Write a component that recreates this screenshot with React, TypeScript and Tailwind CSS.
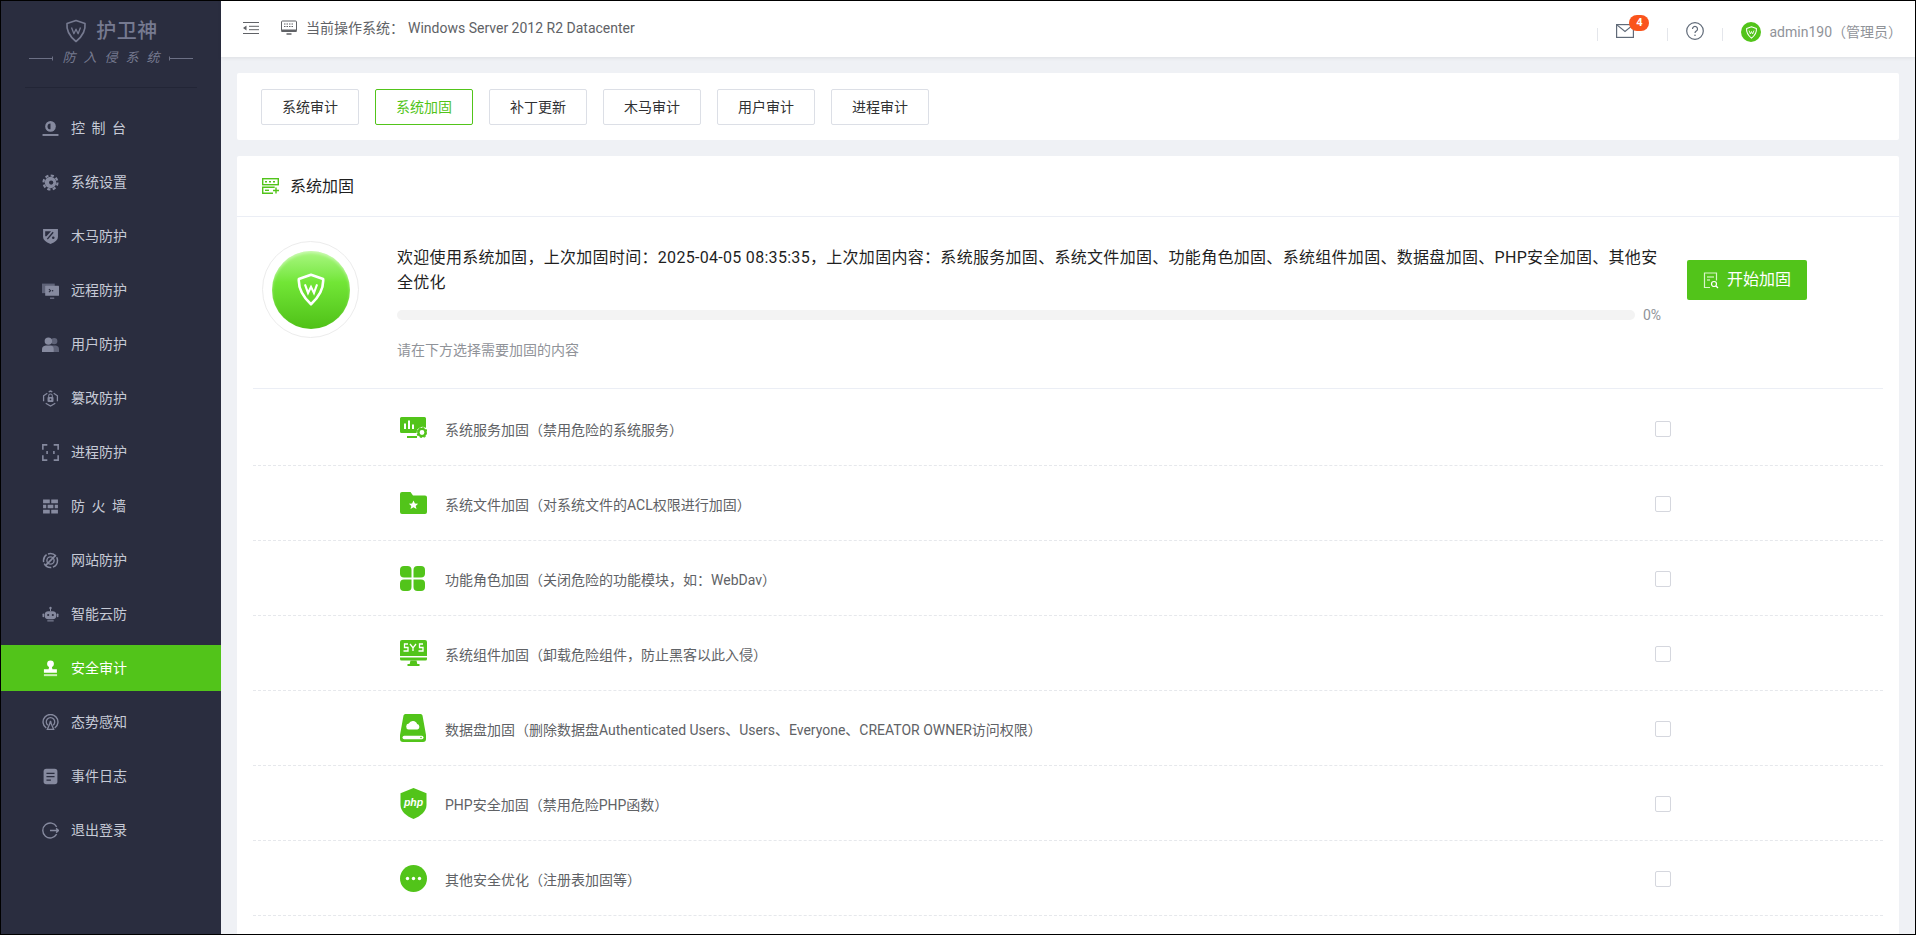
import type { ReactNode } from "react";

const grey = "#868a9f";

function Ico({ children, size = 17 }: { children: ReactNode; size?: number }) {
  return (
    <svg width={size} height={size} viewBox="0 0 16 16" className="shrink-0">
      {children}
    </svg>
  );
}

function Shield({ color = "currentColor", w = 1.4 }: { color?: string; w?: number }) {
  return (
    <g fill="none" stroke={color} strokeWidth={w} strokeLinejoin="round">
      <path d="M8 1 L14 3 Q14.8 9.5 8 15 Q1.2 9.5 2 3 Z" />
      <path d="M5 5.6 L6.6 9.8 L8 6.8 L9.4 9.8 L11 5.6" strokeWidth={w * 0.8} />
    </g>
  );
}

const sideIcons: Record<string, ReactNode> = {
  console: (
    <Ico>
      <circle cx="8" cy="6" r="5" fill={grey} />
      <path d="M8 3.200a2.800 2.800 0 0 0 0 5.600z" fill="#2a2d3f" />
      <rect x="0.500" y="13.200" width="15" height="1.800" fill={grey} />
    </Ico>
  ),
  settings: (
    <Ico>
      <circle cx="8" cy="8" r="5.400" fill={grey} />
      <circle cx="8" cy="8" r="6.600" fill="none" stroke={grey} strokeWidth="2" strokeDasharray="3 2.180" />
      <circle cx="8.600" cy="8" r="2" fill="#2a2d3f" />
    </Ico>
  ),
  trojan: (
    <Ico>
      <path d="M1 1h14v7.500q0 3.800-7 6.500-7-2.700-7-6.500z" fill={grey} />
      <path d="M5 10.500 10.500 4" stroke="#2a2d3f" strokeWidth="1.300" />
      <path d="M3 3h5.500l-4.300 4.800H3z" fill="#2a2d3f" />
      <circle cx="10.600" cy="9.200" r="1.200" fill="#2a2d3f" />
    </Ico>
  ),
  remote: (
    <Ico>
      <rect x="0" y="1.500" width="12" height="9" fill="#5f6378" />
      <rect x="3" y="3.500" width="13" height="9.500" rx="0.500" fill={grey} />
      <path d="M7.500 15.200h4" stroke={grey} strokeWidth="1" />
      <path d="M6.500 6.800l1.600 1.400-1.600 1.400" stroke="#2a2d3f" fill="none" strokeWidth="1" />
      <circle cx="10" cy="8.300" r="0.700" fill="#2a2d3f" />
    </Ico>
  ),
  user: (
    <Ico>
      <circle cx="11.500" cy="4.800" r="3" fill="#5f6378" />
      <path d="M9 9h4q3 .5 3 3.500V15H9z" fill="#5f6378" />
      <circle cx="6" cy="4.800" r="3.500" fill={grey} />
      <path d="M0 15v-2.500Q0 9.500 3.500 9h5Q11 9.500 11 12.500V15z" fill={grey} />
    </Ico>
  ),
  tamper: (
    <Ico>
      <g fill="none" stroke={grey} strokeWidth="1.200">
        <path d="M1.500 10.500v-5L5 3" />
        <path d="M11 3l3.500 2.500v5" />
        <path d="M3.500 12.500 8 15l4.500-2.500" />
        <path d="M6.300 1.800 8 1l1.700.8" />
      </g>
      <rect x="5.200" y="6.500" width="5.600" height="4.700" rx="0.800" fill={grey} />
      <path d="M6.300 6.500V5.400a1.700 1.700 0 0 1 3.400 0v1.100" fill="none" stroke={grey} strokeWidth="1" />
      <circle cx="8" cy="8.800" r="0.800" fill="#2a2d3f" />
    </Ico>
  ),
  process: (
    <Ico>
      <g fill="none" stroke={grey} strokeWidth="1.500">
        <path d="M5 .8H.8v4.500M11 .8h4.200v4.500M5 15.200H.8v-4.500M11 15.200h4.200v-4.500" />
        <path d="M4.800 6.500v3M11.200 6.500v3" />
      </g>
    </Ico>
  ),
  wall: (
    <Ico>
      <path d="M1 1.500h6.300v3.500H1zM8.700 1.500H15v3.500H8.700zM1 6.300h3v3.400H1zM5.300 6.300h5.400v3.400H5.300zM12 6.300h3v3.400h-3zM1 11h6.300v3.500H1zM8.700 11H15v3.500H8.700z" fill={grey} />
    </Ico>
  ),
  web: (
    <Ico>
      <circle cx="8" cy="8" r="6.600" fill="none" stroke={grey} strokeWidth="1.400" strokeDasharray="8 1.500" />
      <circle cx="8" cy="8" r="3.400" fill="none" stroke={grey} strokeWidth="1.300" />
      <path d="M3 13 13 3" stroke={grey} strokeWidth="1.600" />
    </Ico>
  ),
  robot: (
    <Ico>
      <circle cx="8" cy="1.800" r="1.100" fill={grey} />
      <path d="M8 2.500v2.500" stroke={grey} strokeWidth="1" />
      <rect x="2.500" y="5" width="11" height="7.500" rx="3.500" fill={grey} />
      <rect x="0.500" y="7" width="1.500" height="3.500" rx="0.700" fill={grey} />
      <rect x="14" y="7" width="1.500" height="3.500" rx="0.700" fill={grey} />
      <circle cx="5.800" cy="8.500" r="1" fill="#2a2d3f" />
      <circle cx="10.200" cy="8.500" r="1" fill="#2a2d3f" />
      <path d="M5 14h6" stroke={grey} strokeWidth="1" />
    </Ico>
  ),
  audit: (
    <Ico>
      <circle cx="8" cy="3.600" r="3.200" fill="#fff" />
      <path d="M6.800 6h2.400l.6 2.800h4.200V12H1.800V8.800h4.400z" fill="#fff" />
      <rect x="1.800" y="13.300" width="12.400" height="1.900" fill="#cdeeb9" />
    </Ico>
  ),
  radar: (
    <Ico>
      <g fill="none" stroke={grey}>
        <path d="M4 13.200a7 7 0 1 1 8 0" strokeWidth="1.300" />
        <path d="M5.500 10.500a4 4 0 1 1 5 0" strokeWidth="1.200" />
        <path d="M8 7.500l3 7H5z" strokeWidth="1.200" />
      </g>
      <circle cx="8" cy="7.500" r="1" fill={grey} />
    </Ico>
  ),
  log: (
    <Ico>
      <rect x="1.500" y="0.800" width="13" height="14.400" rx="2.500" fill={grey} />
      <path d="M4.200 5h7.600M4.200 8.200h7.600M4.200 11.400h4.200" stroke="#2a2d3f" strokeWidth="1.200" />
    </Ico>
  ),
  logout: (
    <Ico>
      <path d="M13.800 4.500a7 7 0 1 0 0 7" fill="none" stroke={grey} strokeWidth="1.300" />
      <path d="M7.500 8h8M13.300 6l2.200 2-2.200 2" fill="none" stroke={grey} strokeWidth="1.300" />
    </Ico>
  ),
};

const menu = [
  { key: "console", label: "控制台", spaced: true },
  { key: "settings", label: "系统设置" },
  { key: "trojan", label: "木马防护" },
  { key: "remote", label: "远程防护" },
  { key: "user", label: "用户防护" },
  { key: "tamper", label: "篡改防护" },
  { key: "process", label: "进程防护" },
  { key: "wall", label: "防火墙", spaced: true },
  { key: "web", label: "网站防护" },
  { key: "robot", label: "智能云防" },
  { key: "audit", label: "安全审计", active: true },
  { key: "radar", label: "态势感知" },
  { key: "log", label: "事件日志" },
  { key: "logout", label: "退出登录" },
];

const tabs = ["系统审计", "系统加固", "补丁更新", "木马审计", "用户审计", "进程审计"];

const green = "#52c41a";

const rowIcons: ReactNode[] = [
  <svg key="0" width="27" height="22" viewBox="0 0 27 22">
    <path d="M1.500 0h23A1.500 1.500 0 0 1 26 1.500V11a6 6 0 0 0-9.500 5H1.500A1.500 1.500 0 0 1 0 14.500v-13A1.500 1.500 0 0 1 1.500 0z" fill={green} />
    <path d="M5 12V6.500M9 12V3.500M13 12V7.500" stroke="#fff" strokeWidth="2" />
    <rect x="7" y="19" width="10" height="2" fill={green} />
    <circle cx="22" cy="15.500" r="3.600" fill="none" stroke={green} strokeWidth="2.400" />
    <circle cx="22" cy="15.500" r="5" fill="none" stroke={green} strokeWidth="1.200" strokeDasharray="2 1.900" />
  </svg>,
  <svg key="1" width="27" height="22" viewBox="0 0 27 22">
    <path d="M2 0h8.500l2.500 3.500h12a2 2 0 0 1 2 2V20a2 2 0 0 1-2 2H2a2 2 0 0 1-2-2V2a2 2 0 0 1 2-2z" fill={green} />
    <path d="M13.500 8.500l1.400 3 3.200.3-2.400 2.100.8 3.100-3-1.700-3 1.700.8-3.100-2.400-2.100 3.200-.3z" fill="#fff" />
  </svg>,
  <svg key="2" width="25" height="25" viewBox="0 0 25 25">
    <path d="M4 0h3.500A4 4 0 0 1 11.500 4v7.500H4a4 4 0 0 1-4-4V4a4 4 0 0 1 4-4z" fill={green} />
    <path d="M17.500 0H21a4 4 0 0 1 4 4v3.500a4 4 0 0 1-4 4h-7.500V4a4 4 0 0 1 4-4z" fill={green} />
    <path d="M4 13.500h7.500V21a4 4 0 0 1-4 4H4a4 4 0 0 1-4-4v-3.500a4 4 0 0 1 4-4z" fill={green} />
    <path d="M13.500 13.500H21a4 4 0 0 1 4 4V21a4 4 0 0 1-4 4h-3.500a4 4 0 0 1-4-4z" fill={green} />
  </svg>,
  <svg key="3" width="27" height="26" viewBox="0 0 27 26">
    <path d="M2 0h23a2 2 0 0 1 2 2v14H0V2a2 2 0 0 1 2-2z" fill={green} />
    <path d="M0 17.500h27V19a1.500 1.500 0 0 1-1.500 1.500h-24A1.500 1.500 0 0 1 0 19z" fill={green} />
    <path d="M10.500 20.500h6l.8 3.500h-7.600zM7.500 24h12v2h-12z" fill={green} />
    <g fill="none" stroke="#fff" strokeWidth="1.300">
      <path d="M8 4H4.500v3.500H8V11H3.500" />
      <path d="M10 4l3 3.800V11M16 4l-3 3.800" />
      <path d="M23 4h-3.500v3.500H23V11h-4.500" />
    </g>
  </svg>,
  <svg key="4" width="26" height="28" viewBox="0 0 26 28">
    <path d="M5.500 0h15a2 2 0 0 1 2 1.500L26 21v4a3 3 0 0 1-3 3H3a3 3 0 0 1-3-3v-4L3.500 1.500A2 2 0 0 1 5.500 0z" fill={green} />
    <path d="M8.500 15.500a3 3 0 0 1 .3-5.900 4.400 4.400 0 0 1 8.300.5 2.800 2.800 0 0 1 .4 5.400z" fill="#fff" />
    <rect x="2.500" y="21.800" width="21" height="3.400" rx="1.700" fill="#fff" />
    <circle cx="21" cy="23.500" r="0.800" fill={green} />
  </svg>,
  <svg key="5" width="27" height="31" viewBox="0 0 27 31">
    <path d="M13.500 0l13 5.200V17c0 6-5.500 11-13 14C6 28 .5 23 .5 17V5.200z" fill={green} />
    <text x="13.500" y="18" textAnchor="middle" fill="#fff" fontSize="10.500" fontWeight="700" fontStyle="italic" className="[font-family:'Liberation_Sans',sans-serif]">
      php
    </text>
  </svg>,
  <svg key="6" width="27" height="27" viewBox="0 0 27 27">
    <circle cx="13.500" cy="13.500" r="13.500" fill={green} />
    <circle cx="7.500" cy="13.500" r="1.700" fill="#fff" />
    <circle cx="13.500" cy="13.500" r="1.700" fill="#fff" />
    <circle cx="19.500" cy="13.500" r="1.700" fill="#fff" />
  </svg>,
];

const rows = [
  { title: "系统服务加固", desc: "（禁用危险的系统服务）" },
  { title: "系统文件加固", desc: "（对系统文件的ACL权限进行加固）" },
  { title: "功能角色加固", desc: "（关闭危险的功能模块，如：WebDav）" },
  { title: "系统组件加固", desc: "（卸载危险组件，防止黑客以此入侵）" },
  { title: "数据盘加固", desc: "（删除数据盘Authenticated Users、Users、Everyone、CREATOR OWNER访问权限）" },
  { title: "PHP安全加固", desc: "（禁用危险PHP函数）" },
  { title: "其他安全优化", desc: "（注册表加固等）" },
];

function Sidebar() {
  return (
    <aside className="w-[220px] shrink-0 bg-[#2a2d3f] flex flex-col">
      <div className="h-[87px] mx-6 border-b border-[#222536] flex flex-col items-center">
        <div className="flex items-center gap-2 mt-[17px] text-[#767a90]">
          <Ico size={24}>
            <Shield w={1.100} />
          </Ico>
          <span className="text-[20px] leading-[26px] tracking-[0.5px] font-medium">护卫神</span>
        </div>
        <div className="flex items-center gap-[9px] mt-[4px] text-[#767a90]">
          <svg width="24" height="5" viewBox="0 0 24 5">
            <path d="M0 2.500h23.500M23.500 .5v4" stroke="#6c7085" strokeWidth="1" fill="none" />
          </svg>
          <span className="text-[13px] leading-5 italic tracking-[8px] mr-[-8px]">防入侵系统</span>
          <svg width="24" height="5" viewBox="0 0 24 5">
            <path d="M24 2.500H.5M.5 .5v4" stroke="#6c7085" strokeWidth="1" fill="none" />
          </svg>
        </div>
      </div>
      <nav className="mt-[17px] flex flex-col gap-2">
        {menu.map((m) => (
          <div
            key={m.key}
            className={
              m.active
                ? "h-[46px] flex items-center gap-3 pl-[41px] bg-[#52c41a] text-white text-sm"
                : "h-[46px] flex items-center gap-3 pl-[41px] text-[#c6cad6] text-sm"
            }
          >
            {sideIcons[m.key]}
            <span className={m.spaced ? "tracking-[6.500px]" : ""}>{m.label}</span>
          </div>
        ))}
      </nav>
    </aside>
  );
}

function Header() {
  return (
    <header className="h-[56px] shrink-0 bg-white shadow-[0_1px_4px_rgba(0,0,0,0.08)] flex items-center justify-between pl-[22px] pr-[13px] relative">
      <div className="flex items-center text-sm text-[#606266] mt-[-2px]">
        <svg width="16" height="12" viewBox="0 0 16 12" className="shrink-0">
          <path d="M0 .500h16M6 4.300h10M6 7.700h10M0 11.500h16" stroke="#606266" strokeWidth="1" />
          <path d="M3.500 3.500v5L0 6z" fill="#606266" />
        </svg>
        <svg width="16" height="16" viewBox="0 0 16 16" className="ml-[22px] shrink-0">
          <rect x="0.500" y="1" width="15" height="10.500" rx="1" fill="none" stroke="#606266" />
          <path d="M3 4h10M3 6.500h10" stroke="#606266" strokeDasharray="1.500 1" />
          <rect x="0.500" y="9.500" width="15" height="2.500" fill="#606266" />
          <path d="M5.500 14h5" stroke="#606266" strokeWidth="1.500" />
        </svg>
        <span className="ml-[9px]">当前操作系统：</span>
        <span className="ml-1">Windows Server 2012 R2 Datacenter</span>
      </div>
      <div className="flex items-center text-[#909399]">
        <span className="w-px h-[13px] bg-[#e4e6eb] mt-[10px]" />
        <div className="relative ml-[18px] flex mt-[3px]">
          <svg width="18" height="14" viewBox="0 0 18 14">
            <rect x="0.600" y="0.600" width="16.800" height="12.800" fill="none" stroke="#606a78" strokeWidth="1.200" />
            <path d="M.6.600 9 7.500 17.400.600" fill="none" stroke="#606a78" strokeWidth="1.200" />
          </svg>
          <span className="absolute left-[13px] top-[-9px] w-5 h-4 rounded-full bg-[#fa541c] text-white text-[11px] leading-4 font-bold text-center">
            4
          </span>
        </div>
        <span className="w-px h-[13px] bg-[#e4e6eb] mt-[10px] ml-[33px]" />
        <svg width="18" height="18" viewBox="0 0 18 18" className="ml-[18px] mt-[4px]">
          <circle cx="9" cy="9" r="8.300" fill="none" stroke="#606a78" strokeWidth="1.200" />
          <path d="M6.500 7a2.500 2.500 0 1 1 3.800 2.100c-.8.500-1.300 1-1.300 2" fill="none" stroke="#606a78" strokeWidth="1.200" />
          <circle cx="9" cy="13.300" r="0.800" fill="#606a78" />
        </svg>
        <span className="w-px h-[13px] bg-[#e4e6eb] mt-[10px] ml-[18px]" />
        <div className="ml-[18px] mt-[6px] w-5 h-5 rounded-full bg-[#52c41a] flex items-center justify-center">
          <Ico size={13}>
            <Shield color="#fff" w={1.300} />
          </Ico>
        </div>
        <span className="ml-2 mt-[6px] text-sm whitespace-nowrap">admin190（管理员）</span>
      </div>
    </header>
  );
}

function Hero() {
  return (
    <div className="flex items-start pt-[28px] pl-[9px] h-[172px] border-b border-[#ebeef5]">
      <div className="mt-[-4px] w-[97px] h-[97px] shrink-0 rounded-full border border-[#ececec] flex items-center justify-center">
        <div className="w-[78px] h-[78px] rounded-full bg-gradient-to-b from-[#a9f77f] via-[#72e636] via-40% to-[#4fc116] shadow-[inset_0_2px_3px_rgba(255,255,255,0.4)] flex items-center justify-center">
          <svg width="28" height="33" viewBox="0 0 16 19">
            <path d="M8 1 L15 3.500 Q15.500 11 8 18 Q.5 11 1 3.500 Z" fill="none" stroke="#fff" strokeWidth="1.500" strokeLinejoin="round" />
            <path d="M4.500 6.500 L6.300 11.500 L8 8 L9.700 11.500 L11.500 6.500" fill="none" stroke="#fff" strokeWidth="1.200" />
          </svg>
        </div>
      </div>
      <div className="ml-[38px] w-[1268px] shrink-0">
        <p className="text-base leading-[25px] text-[#1f1f1f] tracking-[0.3px]">
          欢迎使用系统加固，上次加固时间：2025-04-05 08:35:35，上次加固内容：系统服务加固、系统文件加固、功能角色加固、系统组件加固、数据盘加固、PHP安全加固、其他安全优化
        </p>
        <div className="mt-[15px] flex items-center">
          <div className="w-[1238px] h-[10px] rounded-full bg-[#f3f3f3]" />
          <span className="ml-2 text-sm leading-[10px] text-[#909399]">0%</span>
        </div>
        <p className="mt-5 text-sm leading-5 text-[#909399]">请在下方选择需要加固的内容</p>
      </div>
      <button className="ml-[22px] mt-[15px] w-[120px] h-10 rounded-[2px] bg-[#52c41a] text-white text-base flex items-center justify-center gap-2">
        <svg width="16" height="17" viewBox="0 0 16 17">
          <path d="M7 15.500H1.500V1h12v7.500" fill="none" stroke="#d8f5c8" strokeWidth="1.200" />
          <path d="M4 5h7" stroke="#d8f5c8" strokeWidth="1.200" />
          <path d="M4 8h3" stroke="#d8f5c8" strokeWidth="1.200" />
          <circle cx="11" cy="12" r="2.500" fill="none" stroke="#fff" strokeWidth="1.200" />
          <path d="M13 14l2 2" stroke="#fff" strokeWidth="1.200" />
        </svg>
        开始加固
      </button>
    </div>
  );
}

export default function App() {
  return (
    <div className="h-screen w-full overflow-hidden border border-black flex bg-[#eff1f5] [font-family:Roboto,'Noto_Sans_CJK_SC',sans-serif]">
      <Sidebar />
      <div className="flex-1 min-w-0 flex flex-col">
        <Header />
        <main className="px-4 pt-4 flex flex-col gap-4 flex-1 min-h-0">
          <section className="h-[67px] shrink-0 bg-white rounded-[2px] flex items-center gap-4 px-6">
            {tabs.map((t) => (
              <div
                key={t}
                className={
                  t === "系统加固"
                    ? "w-[98px] h-9 rounded-[2px] border border-[#52c41a] text-[#52c41a] text-sm flex items-center justify-center"
                    : "w-[98px] h-9 rounded-[2px] border border-[#dcdfe6] text-[#303133] text-sm flex items-center justify-center"
                }
              >
                {t}
              </div>
            ))}
          </section>
          <section className="flex-1 bg-white rounded-t-[2px]">
            <div className="h-[61px] border-b border-[#ebeef5] flex items-center pl-[25px]">
              <svg width="17" height="16" viewBox="0 0 17 16">
                <rect x="0.700" y="0.700" width="15.600" height="6" fill="none" stroke={green} strokeWidth="1.400" />
                <path d="M3 3.700h2M7 3.700h2M11 3.700h2" stroke={green} strokeWidth="1.400" />
                <path d="M11 15.300H.7V9.300h12" fill="none" stroke={green} strokeWidth="1.400" />
                <path d="M3 12.300h4" stroke={green} strokeWidth="1.400" />
                <path d="M14 9.500v6M11 12.500h6" stroke={green} strokeWidth="1.400" />
              </svg>
              <span className="ml-[11px] mt-[2px] text-base text-[#1f1f1f]">系统加固</span>
            </div>
            <div className="px-4">
              <Hero />
              <div className="pt-[2px]">
                {rows.map((r, i) => (
                  <div key={r.title} className="h-[75px] border-b border-dashed border-[#e6e8ec] flex items-center pl-[147px] pr-[212px]">
                    <div className="w-[45px] h-8 flex items-center">{rowIcons[i]}</div>
                    <div className="flex-1 text-sm text-[#606266] mt-[4px]">
                      {r.title}
                      {r.desc}
                    </div>
                    <div className="w-4 h-4 rounded-[2px] border border-[#d5d7de] mt-[2px]" />
                  </div>
                ))}
              </div>
            </div>
          </section>
        </main>
      </div>
    </div>
  );
}
